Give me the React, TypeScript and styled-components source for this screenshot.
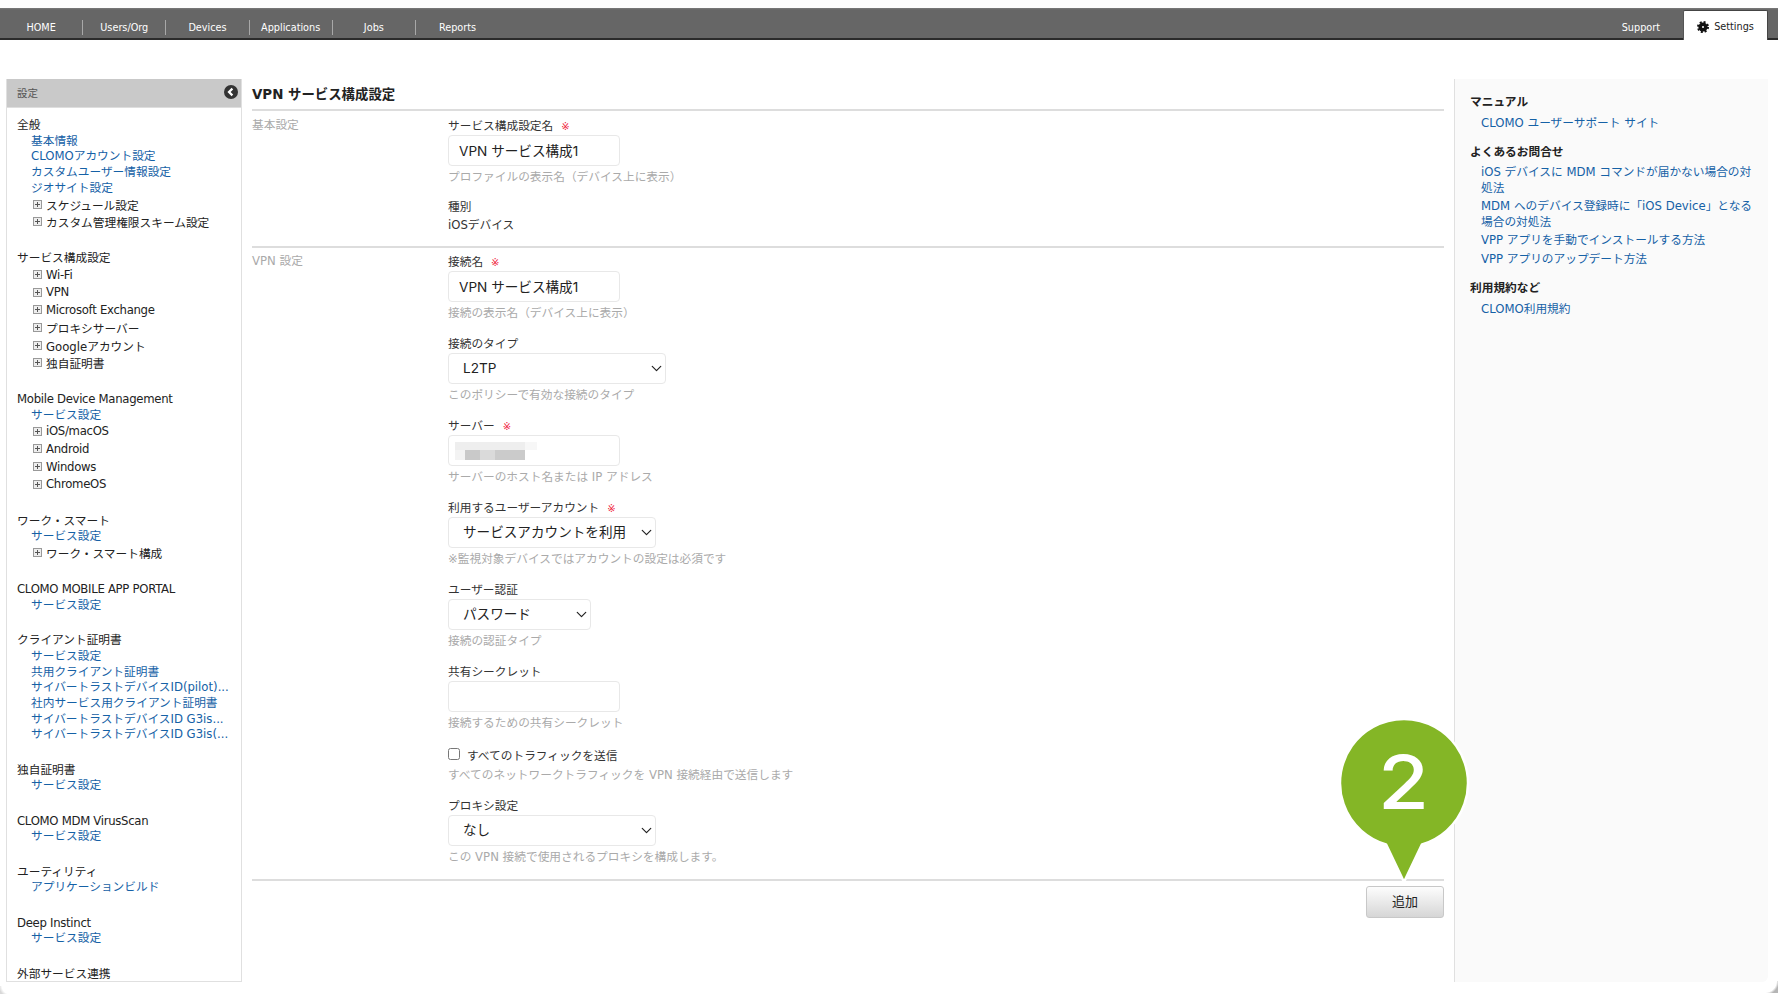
import React from "react";
import styled, { createGlobalStyle } from "styled-components";
import { ChevronDown } from "lucide-react";

const GlobalStyle = createGlobalStyle`
  html, body {
    margin: 0;
    padding: 0;
    background: #fff;
  }
  body {
    font-family: "DejaVu Sans", "Noto Sans CJK JP", sans-serif;
    font-size: 11.7px;
    color: #333;
  }
`;

const Frame = styled.div`
  position: relative;
  height: 1000px;
  overflow: hidden;
`;

const NavBar = styled.nav`
  display: flex;
  justify-content: space-between;
  height: 30px;
  margin-top: 8px;
  padding-right: 10px;
  background: linear-gradient(#7c7c7c 0, #666 2px);
  border-bottom: 2px solid #2b2b2b;
`;

const NavList = styled.div`
  display: flex;
  align-items: flex-end;
  height: 27px;
`;

const NavItem = styled.a<{ $last?: boolean }>`
  width: 83.2px;
  height: 15px;
  line-height: 15px;
  text-align: center;
  color: #fff;
  font-size: 9.7px;
  border-right: ${(props) => (props.$last ? "none" : "1px solid #a8a8a8")};
  box-sizing: border-box;
`;

const NavRight = styled.div`
  display: flex;
  align-items: flex-end;
`;

const SupportLink = styled.a`
  color: #fff;
  font-size: 9.7px;
  line-height: 15px;
  margin-right: 23px;
  margin-bottom: 3px;
`;

const SettingsTab = styled.a`
  display: flex;
  align-items: center;
  justify-content: center;
  gap: 5px;
  width: 85px;
  height: 30px;
  margin-bottom: -2px;
  box-sizing: border-box;
  padding-top: 2px;
  background: #fff;
  color: #222;
  font-size: 9.7px;
  border-top: 1px solid #444;
  border-left: 1px solid #555;
  border-right: 1px solid #444;
  border-radius: 2px 2px 0 0;
`;

const Columns = styled.div`
  display: flex;
  height: 903px;
  margin-top: 39px;
  padding: 0 10px 0 6px;
`;

const Sidebar = styled.aside`
  width: 236px;
  flex: none;
  box-sizing: border-box;
  border: 1px solid #e0e0e0;
  border-top: none;
  overflow: hidden;
`;

const SidebarHead = styled.div`
  display: flex;
  align-items: center;
  justify-content: space-between;
  height: 29px;
  box-sizing: border-box;
  padding: 0 4px 2px 11px;
  margin: 0 -1px;
  background: #c9c9c9;
  border-bottom: 1px solid #dedede;
  color: #555;
  font-size: 10.5px;
`;

const SidebarBody = styled.div`
  padding: 10px 0 0 10px;
`;

const Group = styled.div`
  margin-bottom: 19.6px;
`;

const GroupTitle = styled.div<{ $latin: boolean }>`
  line-height: 15.7px;
  color: #222;
  letter-spacing: ${(props) => (props.$latin ? "-0.3px" : "0")};
`;

const GroupLink = styled.a`
  display: block;
  line-height: 15.7px;
  padding-left: 14px;
  color: #1561a6;
  white-space: nowrap;
`;

const TreeRow = styled.div<{ $latin: boolean }>`
  display: flex;
  align-items: center;
  gap: 4px;
  height: 17.6px;
  box-sizing: border-box;
  padding: 0 0 2px 16px;
  color: #222;
  white-space: nowrap;
  letter-spacing: ${(props) => (props.$latin ? "-0.3px" : "0")};
`;

const Main = styled.main`
  flex: 1;
  margin: 0 10px;
`;

const PageTitle = styled.h1`
  margin: 0;
  height: 30px;
  line-height: 32px;
  font-size: 13.4px;
  font-weight: 700;
  color: #222;
  border-bottom: 2px solid #ddd;
`;

const Section = styled.section`
  display: grid;
  grid-template-columns: 196px 1fr;
  padding: 5px 0 0;
  border-bottom: 2px solid #ddd;
  & + & {
    padding: 4px 0 1px;
  }
`;

const SectionName = styled.div`
  line-height: 18px;
  color: #aaa;
`;

const Field = styled.div`
  margin-bottom: 12px;
`;

const FieldLabel = styled.label`
  display: block;
  height: 18px;
  line-height: 21px;
  margin-bottom: 1px;
  color: #333;
`;

const Required = styled.span`
  margin-left: 8px;
  color: #f0203a;
  font-size: 10px;
`;

const Hint = styled.div`
  height: 20px;
  line-height: 22px;
  color: #aaa;
`;

const PlainValue = styled.div`
  height: 18px;
  line-height: 18px;
  color: #333;
`;

const TextInput = styled.input`
  display: block;
  width: 172px;
  height: 31px;
  box-sizing: border-box;
  padding: 0 10px 2px;
  border: 1.5px solid #e8e8e8;
  border-radius: 4px;
  outline: none;
  background: #fff;
  color: #222;
  font-family: Inter, "Noto Sans CJK JP", sans-serif;
  font-size: 13.6px;
`;

const InputWrap = styled.div`
  position: relative;
  width: 172px;
`;

const Mosaic = styled.svg`
  position: absolute;
  left: 7px;
  top: 7px;
`;

const SelectWrap = styled.div<{ $width: number }>`
  position: relative;
  width: ${(props) => props.$width}px;
  svg {
    position: absolute;
    right: 1px;
    top: 7px;
    color: #222;
    pointer-events: none;
  }
`;

const Select = styled.select`
  display: block;
  width: 100%;
  height: 31px;
  box-sizing: border-box;
  padding: 0 14px 1px;
  appearance: none;
  border: 1.5px solid #e8e8e8;
  border-radius: 4px;
  outline: none;
  background: #fff;
  color: #222;
  font-family: Inter, "Noto Sans CJK JP", sans-serif;
  font-size: 13.6px;
`;

const CheckRow = styled.label`
  display: flex;
  align-items: center;
  gap: 7px;
  height: 20px;
  color: #333;
`;

const CheckBox = styled.input`
  appearance: none;
  width: 12px;
  height: 12px;
  margin: 0;
  border: 1px solid #777;
  border-radius: 2.5px;
  background: #fff;
`;

const Actions = styled.div`
  display: flex;
  justify-content: flex-end;
  padding-top: 5px;
`;

const AddButton = styled.button`
  width: 78px;
  height: 32px;
  padding: 0 0 3px;
  border: 1px solid #c8c8c8;
  border-radius: 3px;
  background: linear-gradient(#fdfdfd, #d6d6d6);
  color: #222;
  font-family: inherit;
  font-size: 13px;
`;

const HelpPanel = styled.aside`
  width: 314px;
  flex: none;
  box-sizing: border-box;
  padding: 15px 10px 0 15px;
  background: #fafafa;
  border-left: 1px solid #e0e0e0;
  border-radius: 0 0 6px 0;
`;

const HelpTitle = styled.h2`
  margin: 0 0 5.5px;
  line-height: 16px;
  font-size: 11.7px;
  font-weight: 700;
  color: #222;
`;

const HelpGroup = styled.div`
  margin-bottom: 12.5px;
`;

const HelpLink = styled.a`
  display: block;
  margin-bottom: 3px;
  padding-left: 11px;
  line-height: 15.6px;
  color: #1561a6;
`;

const Pin = styled.div`
  position: absolute;
  left: 1335px;
  top: 714px;
  width: 138px;
  height: 172px;
`;

const PinNumber = styled.span`
  position: absolute;
  left: -1px;
  right: 0;
  top: 23px;
  text-align: center;
  color: #fff;
  font-family: Inter, sans-serif;
  font-size: 74px;
  font-weight: 500;
  line-height: 90px;
  transform: scaleX(1.12);
`;

const CornerShade = styled.div<{ $right?: boolean }>`
  position: absolute;
  width: 13px;
  height: 12px;
  top: 981px;
  ${(props) =>
    props.$right
      ? "right: 0; background: radial-gradient(circle at 0 0, transparent 11.5px, #b5b5b5 14px);"
      : "left: 0; top: 986px; height: 8px; width: 10px; background: radial-gradient(circle at 100% 0, transparent 8px, #d8d8d8 11px);"}
`;

const PlusIcon = () => (
  <svg width="9" height="9" viewBox="0 0 9 9">
    <rect x="0.5" y="0.5" width="8" height="8" fill="#eee" stroke="#999" />
    <path d="M2 4.5h5M4.5 2v5" stroke="#555" fill="none" />
  </svg>
);

const BackIcon = () => (
  <svg width="14" height="14" viewBox="0 0 14 14">
    <circle cx="7" cy="7" r="7" fill="#333" />
    <path d="M8.4 3.6 5 7l3.4 3.4" stroke="#fff" strokeWidth="2.2" fill="none" />
  </svg>
);

const GearIcon = () => (
  <svg width="12" height="12" viewBox="0 0 12 12">
    <circle cx="6" cy="6" r="4.6" fill="#111" />
    <circle cx="6" cy="6" r="5" fill="none" stroke="#111" strokeWidth="2" strokeDasharray="2 1.93" />
    <circle cx="6" cy="6" r="1" fill="#fff" />
  </svg>
);

const navItems = ["HOME", "Users/Org", "Devices", "Applications", "Jobs", "Reports"];

const isLatin = (text: string) => /^[\x20-\x7e]+$/.test(text);

type Row = { t: "link" | "tree"; label: string };
const link = (label: string): Row => ({ t: "link", label });
const tree = (label: string): Row => ({ t: "tree", label });

const menu: { title: string; rows: Row[] }[] = [
  {
    title: "全般",
    rows: [
      link("基本情報"),
      link("CLOMOアカウント設定"),
      link("カスタムユーザー情報設定"),
      link("ジオサイト設定"),
      tree("スケジュール設定"),
      tree("カスタム管理権限スキーム設定"),
    ],
  },
  {
    title: "サービス構成設定",
    rows: [
      tree("Wi-Fi"),
      tree("VPN"),
      tree("Microsoft Exchange"),
      tree("プロキシサーバー"),
      tree("Googleアカウント"),
      tree("独自証明書"),
    ],
  },
  {
    title: "Mobile Device Management",
    rows: [
      link("サービス設定"),
      tree("iOS/macOS"),
      tree("Android"),
      tree("Windows"),
      tree("ChromeOS"),
    ],
  },
  {
    title: "ワーク・スマート",
    rows: [link("サービス設定"), tree("ワーク・スマート構成")],
  },
  { title: "CLOMO MOBILE APP PORTAL", rows: [link("サービス設定")] },
  {
    title: "クライアント証明書",
    rows: [
      link("サービス設定"),
      link("共用クライアント証明書"),
      link("サイバートラストデバイスID(pilot)..."),
      link("社内サービス用クライアント証明書"),
      link("サイバートラストデバイスID G3is..."),
      link("サイバートラストデバイスID G3is(..."),
    ],
  },
  { title: "独自証明書", rows: [link("サービス設定")] },
  { title: "CLOMO MDM VirusScan", rows: [link("サービス設定")] },
  { title: "ユーティリティ", rows: [link("アプリケーションビルド")] },
  { title: "Deep Instinct", rows: [link("サービス設定")] },
  { title: "外部サービス連携", rows: [] },
];

const help = [
  { title: "マニュアル", links: ["CLOMO ユーザーサポート サイト"] },
  {
    title: "よくあるお問合せ",
    links: [
      "iOS デバイスに MDM コマンドが届かない場合の対処法",
      "MDM へのデバイス登録時に「iOS Device」となる場合の対処法",
      "VPP アプリを手動でインストールする方法",
      "VPP アプリのアップデート方法",
    ],
  },
  { title: "利用規約など", links: ["CLOMO利用規約"] },
];

function SelectField(props: {
  label: string;
  value: string;
  width: number;
  hint: string;
  required?: boolean;
}) {
  return (
    <Field>
      <FieldLabel>
        {props.label}
        {props.required && <Required>※</Required>}
      </FieldLabel>
      <SelectWrap $width={props.width}>
        <Select defaultValue={props.value}>
          <option>{props.value}</option>
        </Select>
        <ChevronDown size={17} strokeWidth={1.7} />
      </SelectWrap>
      <Hint>{props.hint}</Hint>
    </Field>
  );
}

export default function App() {
  return (
    <Frame>
      <GlobalStyle />
      <NavBar>
        <NavList>
          {navItems.map((item, i) => (
            <NavItem key={item} $last={i === navItems.length - 1}>
              {item}
            </NavItem>
          ))}
        </NavList>
        <NavRight>
          <SupportLink>Support</SupportLink>
          <SettingsTab>
            <GearIcon />
            Settings
          </SettingsTab>
        </NavRight>
      </NavBar>

      <Columns>
        <Sidebar>
          <SidebarHead>
            設定
            <BackIcon />
          </SidebarHead>
          <SidebarBody>
            {menu.map((group) => (
              <Group key={group.title}>
                <GroupTitle $latin={isLatin(group.title)}>{group.title}</GroupTitle>
                {group.rows.map((row) =>
                  row.t === "link" ? (
                    <GroupLink key={row.label}>{row.label}</GroupLink>
                  ) : (
                    <TreeRow key={row.label} $latin={isLatin(row.label)}>
                      <PlusIcon />
                      {row.label}
                    </TreeRow>
                  )
                )}
              </Group>
            ))}
          </SidebarBody>
        </Sidebar>

        <Main>
          <PageTitle>VPN サービス構成設定</PageTitle>
          <Section>
            <SectionName>基本設定</SectionName>
            <div>
              <Field>
                <FieldLabel>
                  サービス構成設定名<Required>※</Required>
                </FieldLabel>
                <TextInput defaultValue="VPN サービス構成1" />
                <Hint>プロファイルの表示名（デバイス上に表示）</Hint>
              </Field>
              <Field>
                <PlainValue>種別</PlainValue>
                <PlainValue>iOSデバイス</PlainValue>
              </Field>
            </div>
          </Section>
          <Section>
            <SectionName>VPN 設定</SectionName>
            <div>
              <Field>
                <FieldLabel>
                  接続名<Required>※</Required>
                </FieldLabel>
                <TextInput defaultValue="VPN サービス構成1" />
                <Hint>接続の表示名（デバイス上に表示）</Hint>
              </Field>
              <SelectField
                label="接続のタイプ"
                value="L2TP"
                width={218}
                hint="このポリシーで有効な接続のタイプ"
              />
              <Field>
                <FieldLabel>
                  サーバー<Required>※</Required>
                </FieldLabel>
                <InputWrap>
                  <TextInput />
                  <Mosaic width="82" height="18" viewBox="0 0 82 18">
                    <rect x="0" y="0" width="70" height="8" fill="#eeeeee" />
                    <rect x="70" y="0" width="12" height="8" fill="#f7f7f7" />
                    <rect x="0" y="8" width="10" height="10" fill="#f3f3f3" />
                    <rect x="10" y="8" width="15" height="10" fill="#c9c9c9" />
                    <rect x="25" y="8" width="15" height="10" fill="#dadada" />
                    <rect x="40" y="8" width="30" height="10" fill="#cbcbcb" />
                  </Mosaic>
                </InputWrap>
                <Hint>サーバーのホスト名または IP アドレス</Hint>
              </Field>
              <SelectField
                label="利用するユーザーアカウント"
                value="サービスアカウントを利用"
                width={208}
                required
                hint="※監視対象デバイスではアカウントの設定は必須です"
              />
              <SelectField
                label="ユーザー認証"
                value="パスワード"
                width={143}
                hint="接続の認証タイプ"
              />
              <Field>
                <FieldLabel>共有シークレット</FieldLabel>
                <TextInput />
                <Hint>接続するための共有シークレット</Hint>
              </Field>
              <Field>
                <CheckRow>
                  <CheckBox type="checkbox" />
                  すべてのトラフィックを送信
                </CheckRow>
                <Hint>すべてのネットワークトラフィックを VPN 接続経由で送信します</Hint>
              </Field>
              <SelectField
                label="プロキシ設定"
                value="なし"
                width={208}
                hint="この VPN 接続で使用されるプロキシを構成します。"
              />
            </div>
          </Section>
          <Actions>
            <AddButton>追加</AddButton>
          </Actions>
        </Main>

        <HelpPanel>
          {help.map((group) => (
            <HelpGroup key={group.title}>
              <HelpTitle>{group.title}</HelpTitle>
              {group.links.map((label) => (
                <HelpLink key={label}>{label}</HelpLink>
              ))}
            </HelpGroup>
          ))}
        </HelpPanel>
      </Columns>

      <Pin>
        <svg width="138" height="172" viewBox="0 0 138 172">
          <path
            d="M51 130.4 A64 64 0 1 1 87 130.4 L69 168 Z"
            fill="#84b626"
            stroke="#fff"
            strokeWidth="2.5"
            strokeLinejoin="round"
          />
        </svg>
        <PinNumber>2</PinNumber>
      </Pin>
      <CornerShade />
      <CornerShade $right />
    </Frame>
  );
}
